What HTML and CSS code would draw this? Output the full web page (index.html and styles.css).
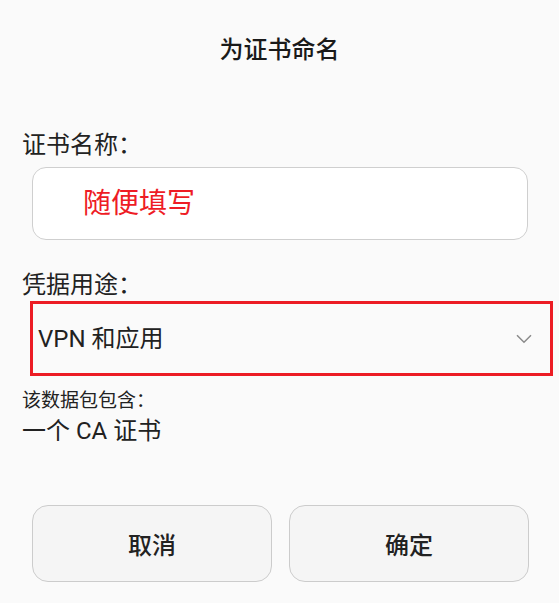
FILE: index.html
```html
<!DOCTYPE html>
<html lang="zh-CN">
<head>
<meta charset="utf-8">
<title>为证书命名</title>
<link rel="stylesheet" href="styles.css">
</head>
<body>
<div class="dialog">
  <div class="title">为证书命名</div>
  <div class="label label-name">证书名称：</div>
  <div class="input"><span class="input-text">随便填写</span></div>
  <div class="label label-use">凭据用途：</div>
  <div class="select">
    <span class="select-text">VPN 和应用</span>
    <svg class="chevron" width="16" height="10" viewBox="0 0 16 10"><path d="M1 1.2 L8 8.2 L15 1.2" fill="none" stroke="#8a8a8a" stroke-width="1.5"/></svg>
  </div>
  <div class="small-label">该数据包包含：</div>
  <div class="value">一个 CA 证书</div>
  <div class="buttons">
    <div class="btn">取消</div>
    <div class="btn">确定</div>
  </div>
</div>
</body>
</html>
```

FILE: styles.css
```css
html, body {
  margin: 0;
  padding: 0;
  background: #fafafa;
}
body {
  font-family: Roboto, "Noto Sans CJK SC", sans-serif;
  color: #212121;
  width: 559px;
  height: 603px;
  overflow: hidden;
}
.dialog {
  display: flex;
  flex-direction: column;
}
.title {
  margin-top: 35px;
  height: 30px;
  line-height: 30px;
  font-size: 24px;
  font-weight: 500;
  text-align: center;
  color: #1a1a1a;
}
.label {
  margin-left: 22px;
  height: 30px;
  line-height: 30px;
  font-size: 24px;
  color: #222;
}
.label-name {
  margin-top: 65px;
}
.input {
  box-sizing: border-box;
  margin-top: 7px;
  margin-left: 32px;
  width: 496px;
  height: 73px;
  background: #ffffff;
  border: 1px solid #cfcfcf;
  border-radius: 14px;
  display: flex;
  align-items: center;
  padding-left: 50px;
}
.input-text {
  font-size: 28px;
  line-height: 34px;
  color: #ee1c25;
}
.label-use {
  margin-top: 30px;
}
.select {
  box-sizing: border-box;
  margin-top: 1px;
  margin-left: 30px;
  width: 523px;
  height: 75px;
  border: 3px solid #ec1c24;
  display: flex;
  align-items: center;
  justify-content: space-between;
  padding-left: 5px;
  padding-right: 18px;
}
.select-text {
  font-size: 24px;
  line-height: 30px;
  color: #212121;
}
.chevron {
  display: block;
}
.small-label {
  margin-top: 13px;
  margin-left: 22px;
  height: 24px;
  line-height: 24px;
  font-size: 19px;
  color: #222;
}
.value {
  margin-top: 4px;
  margin-left: 22px;
  height: 28px;
  line-height: 28px;
  font-size: 24px;
  color: #212121;
}
.buttons {
  margin-top: 60px;
  margin-left: 32px;
  display: grid;
  grid-template-columns: 240px 240px;
  column-gap: 17px;
}
.btn {
  box-sizing: border-box;
  height: 77px;
  background: #f5f5f5;
  border: 1px solid #cccccc;
  border-radius: 16px;
  display: flex;
  align-items: center;
  justify-content: center;
  font-size: 24px;
  font-weight: 500;
  color: #222;
}
```
